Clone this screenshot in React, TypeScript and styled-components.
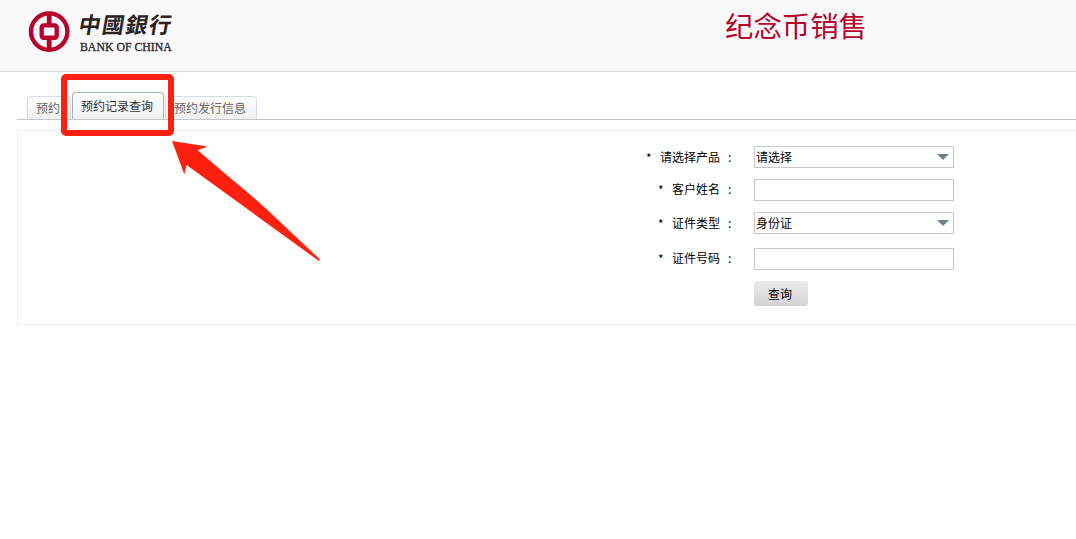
import React, { useState } from "react";
import styled, { createGlobalStyle } from "styled-components";

interface Tab {
  id: number;
  name: string;
}

interface Field {
  id: string;
  label: string;
  type: "select" | "input";
  value?: string;
  gap: number;
}

const tabs: Tab[] = [
  { id: 1, name: "预约" },
  { id: 2, name: "预约记录查询" },
  { id: 3, name: "预约发行信息" },
];

const fields: Field[] = [
  { id: "product", label: "请选择产品", type: "select", value: "请选择", gap: 11 },
  { id: "name", label: "客户姓名", type: "input", gap: 11 },
  { id: "idType", label: "证件类型", type: "select", value: "身份证", gap: 14 },
  { id: "idNumber", label: "证件号码", type: "input", gap: 11 },
];

const BankMark: React.FC = () => (
  <svg width="42" height="42" viewBox="0 0 42 42" fill="none" stroke="#b7042c">
    <circle cx="21.2" cy="20.6" r="18.2" strokeWidth="4.4" />
    <path d="M21.2 3v10M21.2 28v10" strokeWidth="4.8" />
    <rect x="13.7" y="14.4" width="15" height="12.4" rx="2" strokeWidth="4.4" />
  </svg>
);

const App: React.FC = () => {
  const [activeTab, setActiveTab] = useState(2);

  return (
    <Page>
      <GlobalStyle />
      <Header>
        <Logo>
          <BankMark />
          <LogoText>
            <LogoChinese>中國銀行</LogoChinese>
            <LogoEnglish>BANK OF CHINA</LogoEnglish>
          </LogoText>
        </Logo>
        <Title>纪念币销售</Title>
      </Header>
      <TabBar>
        {tabs.map((tab) => (
          <TabItem key={tab.id} $active={tab.id === activeTab} onClick={() => setActiveTab(tab.id)}>
            {tab.name}
          </TabItem>
        ))}
      </TabBar>
      <Panel>
        {fields.map((field) => (
          <Row key={field.id} $gap={field.gap}>
            <Label $raised={field.type === "input"}>
              <Star>*</Star>
              {field.label}
              <Colon>:</Colon>
            </Label>
            {field.type === "select" ? (
              <SelectBox>
                {field.value}
                <svg width="12" height="6" viewBox="0 0 12 6">
                  <path d="M0 0h12L6 6z" fill="#6f7f8c" />
                </svg>
              </SelectBox>
            ) : (
              <Input />
            )}
          </Row>
        ))}
        <QueryButton>查询</QueryButton>
      </Panel>
      <Highlight />
      <Arrow width="150" height="122" viewBox="0 0 150 122">
        <path d="M2 1L37.5 6.5L27.7 10.3L62 39.5Q92 64 108 80L150 119.5L149 121L16.5 25L14.3 34.5Z" fill="#ff2010" />
      </Arrow>
    </Page>
  );
};

export default App;

const GlobalStyle = createGlobalStyle`
  * {
    box-sizing: border-box;
  }
  body {
    margin: 0;
    background: #fff;
    font-family: "Noto Sans CJK SC", sans-serif;
    font-size: 12px;
    color: #000;
  }
`;

const Page = styled.div`
  position: relative;
  height: 539px;
  overflow: hidden;
`;

const Header = styled.div`
  display: flex;
  height: 72px;
  padding-left: 28px;
  background: #f9f9f9;
  border-bottom: 1px solid #dcdcdc;
`;

const Logo = styled.div`
  display: flex;
  width: 697px;
  padding-top: 11px;
`;

const LogoText = styled.div`
  display: flex;
  flex-direction: column;
  margin-left: 9px;
  color: #2b2222;
`;

const LogoChinese = styled.div`
  height: 28px;
  line-height: 25px;
  font-family: "Noto Sans CJK TC", sans-serif;
  font-size: 22px;
  font-weight: 700;
  letter-spacing: 1.5px;
  transform: skewX(-10deg);
  white-space: nowrap;
`;

const LogoEnglish = styled.div`
  font-family: "Liberation Serif", serif;
  font-size: 11.8px;
  line-height: 16px;
  margin-left: 1px;
  -webkit-text-stroke: 0.3px #2b2222;
  white-space: nowrap;
`;

const Title = styled.div`
  font-size: 28.4px;
  line-height: 50px;
  color: #b7042c;
  white-space: nowrap;
`;

const TabBar = styled.div`
  display: flex;
  align-items: flex-end;
  gap: 1px;
  height: 48px;
  margin-left: 17px;
  padding-left: 10px;
  border-bottom: 1px solid #c3c7c9;
`;

const TabItem = styled.div<{ $active: boolean }>`
  height: ${({ $active }) => ($active ? 27 : 23)}px;
  padding: 0 10px 0 8px;
  line-height: ${({ $active }) => ($active ? 25 : 21)}px;
  border: 1px solid ${({ $active }) => ($active ? "#a3b1bb" : "#d3dde4")};
  border-bottom: none;
  border-radius: 4px 4px 0 0;
  background: linear-gradient(#fdfdfd, #f1f1f1);
  color: ${({ $active }) => ($active ? "#27313f" : "#666")};
  cursor: pointer;
  white-space: nowrap;
`;

const Panel = styled.div`
  height: 195px;
  margin: 10px 0 0 17px;
  padding-top: 15px;
  border: 1px solid #ececec;
  border-right: none;
`;

const Row = styled.div<{ $gap: number }>`
  display: flex;
  height: 22px;
  margin-bottom: ${({ $gap }) => $gap}px;
`;

const Label = styled.div<{ $raised: boolean }>`
  display: flex;
  justify-content: flex-end;
  width: 714px;
  line-height: ${({ $raised }) => ($raised ? 20 : 22)}px;
`;

const Star = styled.span`
  width: 14px;
  padding-top: 1px;
`;

const Colon = styled.span`
  width: 4px;
  margin-left: 8px;
`;

const SelectBox = styled.div`
  display: flex;
  align-items: center;
  justify-content: space-between;
  width: 200px;
  margin-left: 22px;
  padding: 0 4px 0 1px;
  line-height: 20px;
  border: 1px solid #c8c8c8;
`;

const Input = styled.input`
  width: 200px;
  margin: 0 0 0 22px;
  padding: 0 2px;
  border: 1px solid #c8c8c8;
  outline: none;
`;

const QueryButton = styled.button`
  display: block;
  width: 54px;
  height: 25px;
  margin-left: 736px;
  padding: 0 2px 1px 0;
  border: none;
  border-radius: 3px;
  background: linear-gradient(#ebebeb, #d3d3d3);
  font-family: inherit;
  font-size: 12px;
  color: #000;
`;

const Highlight = styled.div`
  position: absolute;
  left: 61px;
  top: 74px;
  width: 113px;
  height: 62px;
  border: 6px solid #ff2010;
  border-radius: 5px;
`;

const Arrow = styled.svg`
  position: absolute;
  left: 170px;
  top: 140px;
`;
